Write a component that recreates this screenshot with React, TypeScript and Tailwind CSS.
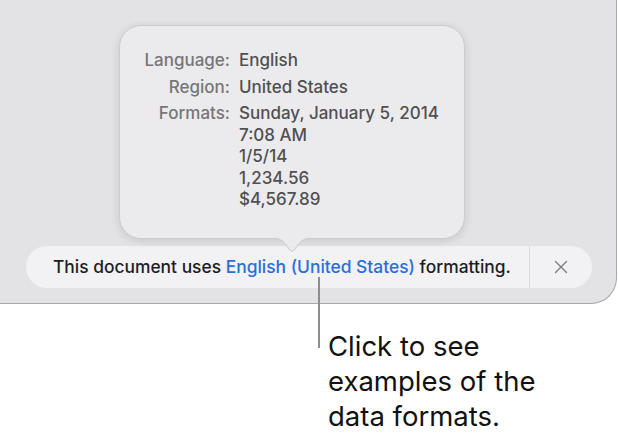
import React from 'react';

const formats = ['Sunday, January 5, 2014', '7:08 AM', '1/5/14', '1,234.56', '$4,567.89'];

function InfoRow({ label, values }: { label: string; values: string[] }) {
  return (
    <div className="flex">
      <div className="w-[110px] text-right text-[#767678]">{label}</div>
      <div className="ml-[9px] flex flex-col text-[#505052]">
        {values.map((v) => (
          <span key={v}>{v}</span>
        ))}
      </div>
    </div>
  );
}

function Popover() {
  return (
    <div className="absolute left-[119px] top-[25px] h-[214px] w-[346px] rounded-[22px] border border-[#cdcdd0] bg-[#ebebed] pt-[24px] text-[17px] font-medium leading-[21.5px] shadow-[0_2px_10px_rgba(0,0,0,0.12)]">
      <div className="flex flex-col gap-[5px]">
        <InfoRow label="Language:" values={['English']} />
        <InfoRow label="Region:" values={['United States']} />
        <InfoRow label="Formats:" values={formats} />
      </div>
      {/* pointer down to the link */}
      <svg
        className="absolute left-[152px] top-[212px]"
        width="40"
        height="16"
        viewBox="0 0 40 16"
      >
        <path d="M0 0 C10 0 13 5 17 11 Q20 15.5 23 11 C27 5 30 0 40 0 Z" fill="#ebebed" />
        <path d="M0 0 C10 0 13 5 17 11 Q20 15.5 23 11 C27 5 30 0 40 0" fill="none" stroke="#c9c9cc" strokeWidth="1" />
      </svg>
    </div>
  );
}

function FormatBar() {
  return (
    <div className="flex h-[42px] w-[566px] items-center rounded-full bg-[#f2f2f4] text-[17.4px] font-medium text-[#1d1d1f]">
      <div className="flex-1 whitespace-nowrap pl-[27px]">
        This document uses <span className="text-[#2a6fd9]">English (United States)</span> formatting.
      </div>
      <div className="h-full w-px bg-[#dcdcdf]" />
      <div className="flex h-full w-[62px] items-center justify-center">
        <svg width="14" height="14" viewBox="0 0 14 14">
          <path d="M1.5 1.5 L12.5 12.5 M12.5 1.5 L1.5 12.5" stroke="#7c7c7f" strokeWidth="1.4" strokeLinecap="round" />
        </svg>
      </div>
    </div>
  );
}

export default function App() {
  return (
    <div
      className="relative h-[436px] w-[618px] overflow-hidden bg-white"
      style={{ fontFamily: 'Inter, "Noto Sans", sans-serif' }}
    >
      <div className="relative flex h-[304px] w-[617px] flex-col justify-end rounded-br-[26px] border-b-[1.5px] border-r-[1.5px] border-[#a7a7a9] bg-[#e3e3e6] pb-[15px] pl-[26px]">
        <Popover />
        <FormatBar />
      </div>

      {/* callout */}
      <div className="absolute left-[318px] top-[277px] h-[71px] w-[2px] bg-[#8d8d8f]" />
      <div className="mt-[25px] pl-[328px] text-[27.5px] leading-[35px] text-[#111]">
        <div>Click to see</div>
        <div>examples of the</div>
        <div>data formats.</div>
      </div>
    </div>
  );
}
